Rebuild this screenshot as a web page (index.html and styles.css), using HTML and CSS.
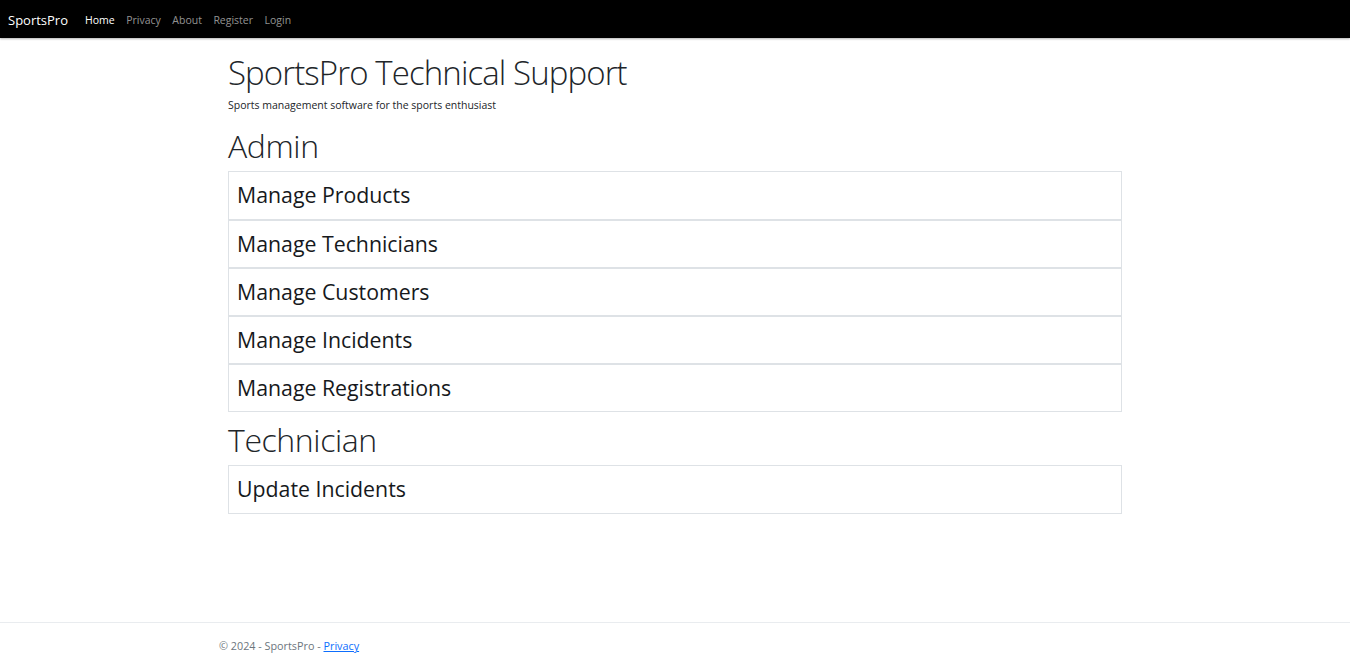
FILE: index.html
```html
<!DOCTYPE html>
<html lang="en">
<head>
<meta charset="utf-8">
<title>SportsPro</title>
<link rel="stylesheet" href="styles.css">
</head>
<body>
<header class="navbar">
  <a class="brand" href="#">SportsPro</a>
  <nav class="nav">
    <a class="nav-link active" href="#">Home</a>
    <a class="nav-link" href="#">Privacy</a>
    <a class="nav-link" href="#">About</a>
    <a class="nav-link" href="#">Register</a>
    <a class="nav-link" href="#">Login</a>
  </nav>
</header>
<main class="container">
  <h1 class="title">SportsPro Technical Support</h1>
  <p class="lead">Sports management software for the sports enthusiast</p>
  <h2 class="section">Admin</h2>
  <div class="list">
    <a class="item" href="#">Manage Products</a>
    <a class="item" href="#">Manage Technicians</a>
    <a class="item" href="#">Manage Customers</a>
    <a class="item" href="#">Manage Incidents</a>
    <a class="item" href="#">Manage Registrations</a>
  </div>
  <h2 class="section">Technician</h2>
  <div class="list">
    <a class="item" href="#">Update Incidents</a>
  </div>
</main>
<footer class="footer">
  <div class="footer-inner">&copy; 2024 - SportsPro - <a href="#">Privacy</a></div>
</footer>
</body>
</html>
```
FILE: styles.css
```css
* { box-sizing: border-box; }
html, body { margin: 0; height: 100%; }
body {
  font-family: "Open Sans", "Noto Sans", sans-serif;
  color: #212529;
  background: #fff;
  display: flex;
  flex-direction: column;
  min-height: 666px;
}
a { text-decoration: none; color: inherit; }
.navbar {
  background: #000;
  height: 38px;
  display: flex;
  align-items: center;
  padding: 0 8px 0 8px;
  box-shadow: 0 1px 2px rgba(0,0,0,0.3);
}
.brand { color: #fff; font-size: 13px; margin-right: 17px; padding-top: 2px; }
.nav { display: flex; gap: 11.5px; padding-top: 2px; }
.nav-link { color: rgba(255,255,255,0.58); font-size: 10.5px; }
.nav-link.active { color: #fff; }
.container {
  width: 894px;
  margin: 0 auto;
  padding-top: 15px;
  flex: 1;
}
.title {
  font-weight: 300;
  font-size: 33px;
  letter-spacing: -0.9px;
  line-height: 40px;
  margin: 0;
  color: #212529;
}
.lead { font-size: 10.5px; margin: 5px 0 14px; line-height: 14px; }
.section {
  font-weight: 300;
  font-size: 32px;
  letter-spacing: -0.4px;
  line-height: 40px;
  margin: 0 0 5px;
}
.list {
  border: 1px solid #dee2e6;
  margin-bottom: 8px;
}
.item {
  display: block;
  height: 48px;
  line-height: 46px;
  padding: 0 8px;
  font-size: 21.3px;
  color: #16191c;
  border-top: 2px solid #dee2e6;
}
.item:first-child { border-top: 0; height: 47px; }
.footer {
  border-top: 1px solid #e9ecef;
  height: 44px;
}
.footer-inner {
  width: 912px;
  margin: 0 auto;
  padding-top: 15px;
  font-size: 10.8px;
  color: #6c757d;
}
.footer-inner a { color: #0d6efd; text-decoration: underline; }
```
